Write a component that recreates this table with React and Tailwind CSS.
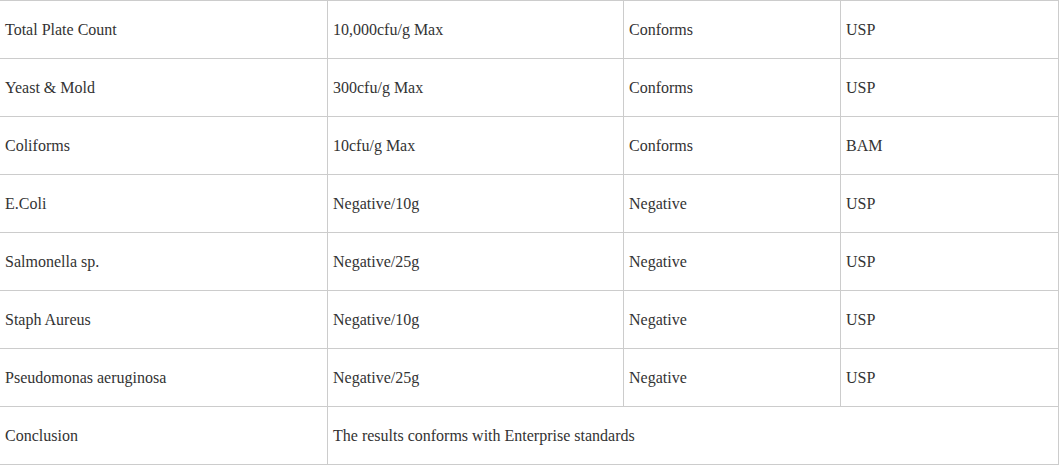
import React from "react";

const rows = [
  ["Total Plate Count", "10,000cfu/g Max", "Conforms", "USP"],
  ["Yeast & Mold", "300cfu/g Max", "Conforms", "USP"],
  ["Coliforms", "10cfu/g Max", "Conforms", "BAM"],
  ["E.Coli", "Negative/10g", "Negative", "USP"],
  ["Salmonella sp.", "Negative/25g", "Negative", "USP"],
  ["Staph Aureus", "Negative/10g", "Negative", "USP"],
  ["Pseudomonas aeruginosa", "Negative/25g", "Negative", "USP"],
];

const cell = "border border-[#cccccc] pl-[5px] pr-2 pt-px align-middle h-[58px] p-0";

export default function App() {
  return (
    <div className="bg-white w-[1059px] h-[465px] overflow-hidden">
      <table
        className="border-collapse text-[16px] text-[#333333] -ml-px"
        style={{ fontFamily: '"Liberation Serif", "Times New Roman", serif', tableLayout: "fixed", width: "1059px" }}
      >
        <colgroup>
          <col className="w-[328px]" />
          <col className="w-[296px]" />
          <col className="w-[217px]" />
          <col className="w-[218px]" />
        </colgroup>
        <tbody>
          {rows.map((r, i) => (
            <tr key={i}>
              {r.map((c, j) => (
                <td key={j} className={cell}>
                  {c}
                </td>
              ))}
            </tr>
          ))}
          <tr>
            <td className={cell}>Conclusion</td>
            <td className={cell} colSpan={3}>
              The results conforms with Enterprise standards
            </td>
          </tr>
        </tbody>
      </table>
    </div>
  );
}
